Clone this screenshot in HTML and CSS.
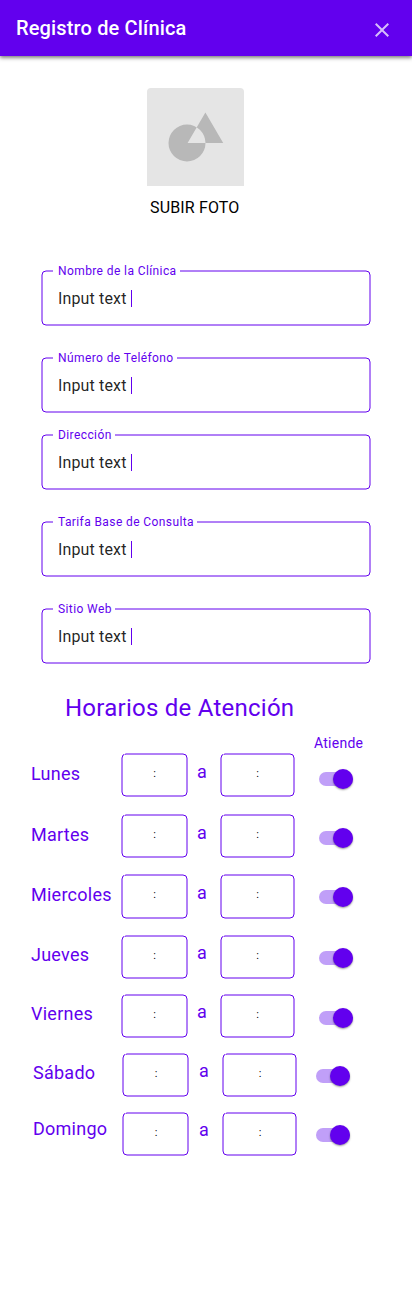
FILE: index.html
```html
<!DOCTYPE html>
<html lang="es">
<head>
<meta charset="utf-8">
<title>Registro de Clínica</title>
<meta name="viewport" content="width=device-width, initial-scale=1">
<link rel="stylesheet" href="styles.css">
</head>
<body>
<header class="app-bar">
  <h1 class="app-title">Registro de Clínica</h1>
  <svg class="close" viewBox="0 0 24 24" role="img" aria-label="Cerrar"><path d="M19 6.41L17.59 5 12 10.59 6.41 5 5 6.41 10.59 12 5 17.59 6.41 19 12 13.41 17.59 19 19 17.59 13.41 12z"/></svg>
</header>
<main>
  <section class="photo">
    <div class="thumb">
      <svg class="shapes" viewBox="0 0 97 98"><path fill-rule="evenodd" d="M21.5 55a18.5 18.5 0 1 0 37 0a18.5 18.5 0 1 0-37 0zM58.4 24.6L76.2 55H40.6z"/></svg>
    </div>
    <span class="photo-label">SUBIR FOTO</span>
  </section>

  <form class="fields">
    <div class="field"><svg class="outline"><rect width="100%" height="100%" rx="4"/></svg><label class="field-label">Nombre de la Clínica</label><span class="value">Input text</span><i class="caret"></i></div>
    <div class="field"><svg class="outline"><rect width="100%" height="100%" rx="4"/></svg><label class="field-label">Número de Teléfono</label><span class="value">Input text</span><i class="caret"></i></div>
    <div class="field field-close"><svg class="outline"><rect width="100%" height="100%" rx="4"/></svg><label class="field-label">Dirección</label><span class="value">Input text</span><i class="caret"></i></div>
    <div class="field"><svg class="outline"><rect width="100%" height="100%" rx="4"/></svg><label class="field-label">Tarifa Base de Consulta</label><span class="value">Input text</span><i class="caret"></i></div>
    <div class="field"><svg class="outline"><rect width="100%" height="100%" rx="4"/></svg><label class="field-label">Sitio Web</label><span class="value">Input text</span><i class="caret"></i></div>
  </form>

  <section class="schedule">
    <h2 class="schedule-title">Horarios de Atención</h2>
    <div class="column-head">Atiende</div>
    <div class="day day-lunes">
      <span class="day-name">Lunes</span>
      <div class="time"><svg class="outline"><rect width="100%" height="100%" rx="4"/></svg>:</div>
      <span class="to">a</span>
      <div class="time"><svg class="outline"><rect width="100%" height="100%" rx="4"/></svg>:</div>
      <div class="switch"><i class="knob"></i></div>
    </div>
    <div class="day day-martes">
      <span class="day-name">Martes</span>
      <div class="time"><svg class="outline"><rect width="100%" height="100%" rx="4"/></svg>:</div>
      <span class="to">a</span>
      <div class="time"><svg class="outline"><rect width="100%" height="100%" rx="4"/></svg>:</div>
      <div class="switch"><i class="knob"></i></div>
    </div>
    <div class="day day-miercoles">
      <span class="day-name">Miercoles</span>
      <div class="time"><svg class="outline"><rect width="100%" height="100%" rx="4"/></svg>:</div>
      <span class="to">a</span>
      <div class="time"><svg class="outline"><rect width="100%" height="100%" rx="4"/></svg>:</div>
      <div class="switch"><i class="knob"></i></div>
    </div>
    <div class="day day-jueves">
      <span class="day-name">Jueves</span>
      <div class="time"><svg class="outline"><rect width="100%" height="100%" rx="4"/></svg>:</div>
      <span class="to">a</span>
      <div class="time"><svg class="outline"><rect width="100%" height="100%" rx="4"/></svg>:</div>
      <div class="switch"><i class="knob"></i></div>
    </div>
    <div class="day day-viernes">
      <span class="day-name">Viernes</span>
      <div class="time"><svg class="outline"><rect width="100%" height="100%" rx="4"/></svg>:</div>
      <span class="to">a</span>
      <div class="time"><svg class="outline"><rect width="100%" height="100%" rx="4"/></svg>:</div>
      <div class="switch"><i class="knob"></i></div>
    </div>
    <div class="day day-weekend day-sabado">
      <span class="day-name">Sábado</span>
      <div class="time"><svg class="outline"><rect width="100%" height="100%" rx="4"/></svg>:</div>
      <span class="to">a</span>
      <div class="time"><svg class="outline"><rect width="100%" height="100%" rx="4"/></svg>:</div>
      <div class="switch"><i class="knob"></i></div>
    </div>
    <div class="day day-weekend day-domingo">
      <span class="day-name">Domingo</span>
      <div class="time"><svg class="outline"><rect width="100%" height="100%" rx="4"/></svg>:</div>
      <span class="to">a</span>
      <div class="time"><svg class="outline"><rect width="100%" height="100%" rx="4"/></svg>:</div>
      <div class="switch"><i class="knob"></i></div>
    </div>
  </section>
</main>
</body>
</html>
```

FILE: styles.css
```css
:root {
  --primary: #6200ee;
}

* {
  box-sizing: border-box;
}

body {
  margin: 0;
  min-height: 1316px;
  background: #fff;
  color: #000;
  font-family: Roboto, sans-serif;
}

h1, h2 {
  margin: 0;
}

/* App bar */
.app-bar {
  display: flex;
  justify-content: space-between;
  height: 56px;
  padding: 16px 18px 0 16px;
  background: var(--primary);
  box-shadow: 0 2px 4px rgba(0, 0, 0, .4), 0 1px 3px rgba(0, 0, 0, .2);
}

.app-title {
  color: #fff;
  font-size: 20px;
  font-weight: 500;
  line-height: 24px;
  letter-spacing: .15px;
}

.close {
  width: 24px;
  height: 24px;
  margin-top: 2px;
  fill: #fff;
  opacity: .74;
}

/* Photo upload */
.photo {
  display: flex;
  flex-direction: column;
  width: 97px;
  margin: 32px 0 0 147px;
}

.thumb {
  height: 98px;
  border-radius: 4px 4px 0 0;
  background: #e5e5e5;
}

.shapes {
  display: block;
  width: 97px;
  height: 98px;
  fill: #b8b8b8;
}

.photo-label {
  margin: 10px 0 0 3px;
  font-size: 16px;
  line-height: 24px;
  letter-spacing: .15px;
  white-space: nowrap;
}

/* Outlined text fields */
.outline {
  position: absolute;
  top: 1px;
  left: 1px;
  width: calc(100% - 2px);
  height: calc(100% - 2px);
  overflow: visible;
  fill: none;
  stroke: var(--primary);
}

.fields {
  display: flex;
  flex-direction: column;
  gap: 31px;
  padding: 50px 41px 0;
}

.field {
  position: relative;
  display: flex;
  height: 56px;
  padding: 17px 17px 0;
}

.field-close {
  margin-top: -10px;
}

.field-label {
  position: absolute;
  top: -7px;
  left: 12px;
  padding: 0 3px 0 5px;
  background: #fff;
  color: var(--primary);
  font-size: 12px;
  line-height: 16px;
  letter-spacing: .4px;
}

.value {
  color: rgba(0, 0, 0, .87);
  font-size: 16px;
  line-height: 24px;
  letter-spacing: .15px;
  width: 73px;
}

.caret {
  width: 1px;
  height: 17px;
  margin-top: 3px;
  background: var(--primary);
}

/* Opening hours */
.schedule {
  padding-top: 28px;
  color: var(--primary);
}

.schedule-title {
  margin-left: 65px;
  font-size: 24px;
  font-weight: 400;
  line-height: 32px;
  letter-spacing: .25px;
}

.column-head {
  margin: 9px 0 0 314px;
  font-size: 14px;
  line-height: 20px;
  letter-spacing: .25px;
}

.day {
  --name-top: 8px;
  --to-top: 6px;
  --switch-top: 16px;
  display: grid;
  grid-template-columns: 90px 67px 32px 75px 24px 34px;
  align-items: start;
  height: 60px;
  padding-left: 31px;
}

.day-lunes { --name-top: 9px; --to-top: 7px; --switch-top: 19px; height: 61px; }
.day-martes { --name-top: 9px; --to-top: 7px; --switch-top: 17px; }
.day-miercoles { --name-top: 9px; --to-top: 7px; height: 61px; }
.day-jueves { height: 59px; }
.day-viernes { --switch-top: 17px; height: 59px; }
.day-sabado { height: 59px; }
.day-domingo { --name-top: 5px; }

.day-weekend {
  grid-template-columns: 89px 67px 33px 75px 19px 34px;
  padding-left: 33px;
}

.day-name,
.to {
  font-size: 18px;
  line-height: 24px;
  letter-spacing: .25px;
}

.day-name {
  margin-top: var(--name-top);
}

.to {
  margin: var(--to-top) 0 0 9px;
}

.day-weekend .to {
  margin-left: 10px;
}

.time {
  position: relative;
  height: 44px;
  padding-top: 13px;
  color: #000;
  font-size: 11px;
  line-height: 16px;
  text-align: center;
}

.day-miercoles .time {
  height: 45px;
}

.day-weekend .time {
  padding-left: 1px;
}

.time::after {
  content: "";
  position: absolute;
  top: 0;
  left: 3px;
  width: 1px;
  height: 2px;
  background: rgba(255, 255, 255, .6);
}

.switch {
  grid-column: 6;
  position: relative;
  width: 34px;
  height: 14px;
  margin-top: var(--switch-top);
  border-radius: 7px;
  background: #c09ff8;
}

.knob {
  position: absolute;
  top: -3px;
  right: 0;
  width: 20px;
  height: 20px;
  border-radius: 50%;
  background: var(--primary);
  box-shadow: 0 1px 2px rgba(0, 0, 0, .4);
}
```
